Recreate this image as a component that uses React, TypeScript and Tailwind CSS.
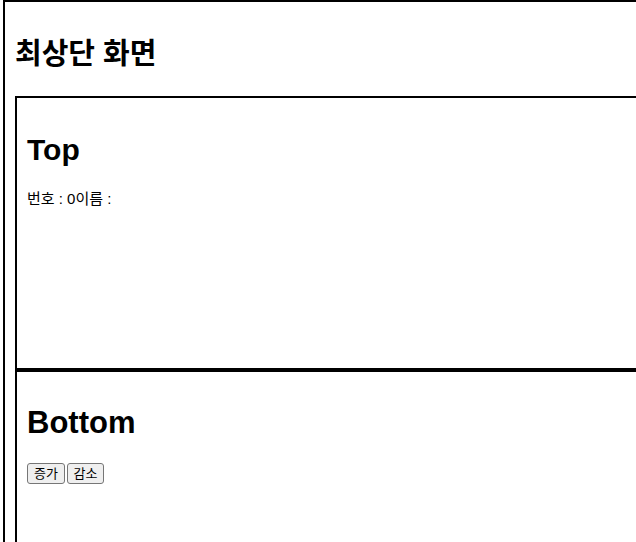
import React from "react";

const font = { fontFamily: '"Liberation Sans", "Noto Sans CJK KR", sans-serif' };

export default function App() {
  return (
    <div className="w-[636px] h-[542px] overflow-hidden bg-white text-black" style={font}>
      <div className="ml-[3px] w-[720px] h-[700px] border-2 border-black px-[10px]">
        <h1 className="mt-[35px] mb-[25px] text-[29px] leading-[34px] font-bold">최상단 화면</h1>
        <div className="h-[274px] border-2 border-black pl-[10px]">
          <h2 className="mt-[35px] text-[30px] leading-[34px] font-bold">Top</h2>
          <div className="mt-[22px] text-[15px] leading-[20px]">번호 : 0이름 :</div>
        </div>
        <div className="h-[300px] border-2 border-black pl-[10px]">
          <h2 className="mt-[34px] text-[31px] leading-[34px] font-bold">Bottom</h2>
          <div className="mt-[23px] flex gap-[2px]">
            <button className="w-[38px] h-[21px] text-[13px] leading-[19px] bg-[#efefef] border border-[#767676] rounded-[3px]">증가</button>
            <button className="w-[37px] h-[21px] text-[13px] leading-[19px] bg-[#efefef] border border-[#767676] rounded-[3px]">감소</button>
          </div>
        </div>
      </div>
    </div>
  );
}
